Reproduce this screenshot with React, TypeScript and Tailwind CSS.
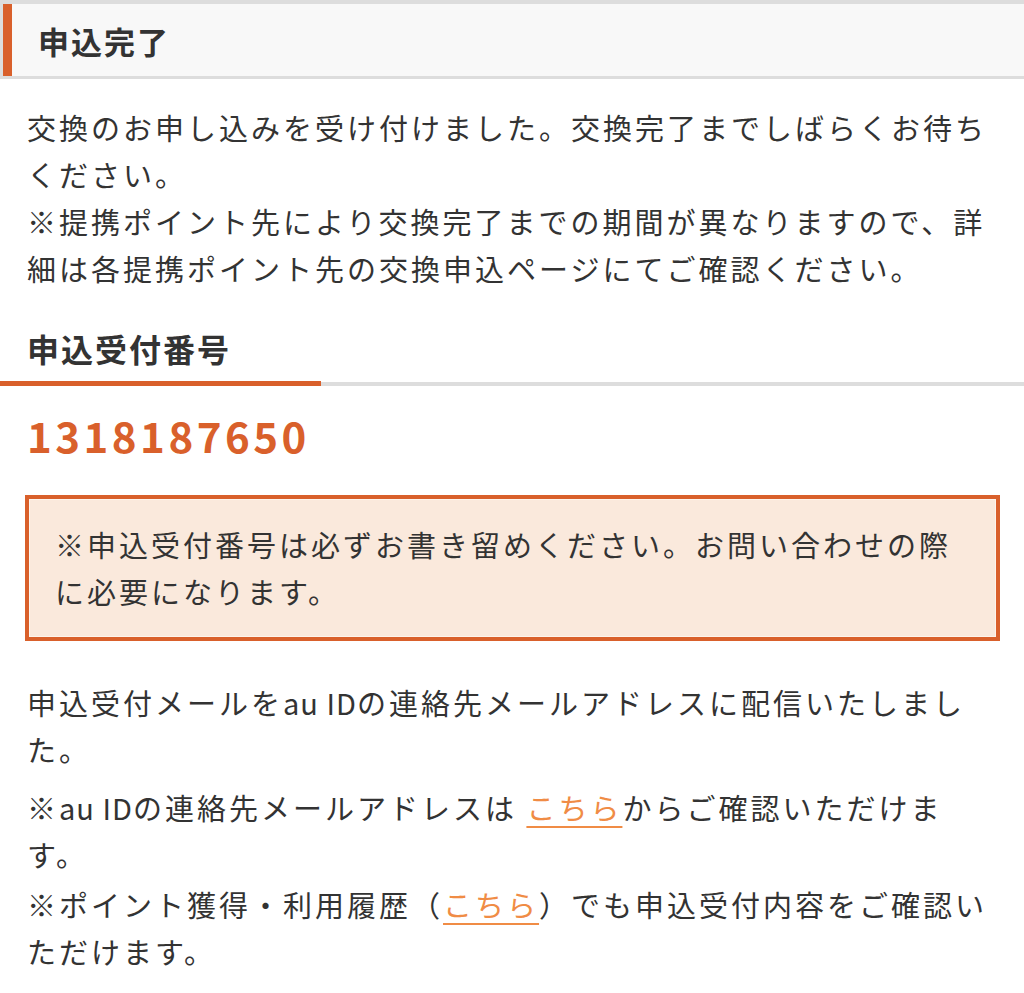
import React from "react";

const ORANGE = "#d9602b";

function SectionTitle({ children }: { children: React.ReactNode }) {
  return (
    <div className="mt-[32px]">
      <h2 className="px-[27px] pb-[9px] text-[32px] font-bold leading-[48px] tracking-[2px]">
        {children}
      </h2>
      <div className="flex h-[5px] items-center">
        <div className="h-[5px] w-[321px] bg-[#d9602b]" />
        <div className="h-[4px] flex-1 bg-[#dddddd]" />
      </div>
    </div>
  );
}

function TextLink({ children }: { children: React.ReactNode }) {
  return (
    <a
      href="#"
      className="text-[#f08c45] underline decoration-[#f08c45] decoration-2 underline-offset-[6px]"
    >
      {children}
    </a>
  );
}

function Latin({ children }: { children: React.ReactNode }) {
  return <span className="tracking-[1px]">{children}</span>;
}

export default function App() {
  return (
    <div className="min-h-[993px] w-[1024px] bg-white font-['Noto_Sans_CJK_JP','Noto_Sans',sans-serif] text-[#333333]">
      {/* page heading */}
      <div className="border-t-4 border-b-[3px] border-[#dddddd] bg-[#dddddd] pl-[3px]">
        <div className="flex h-[72px] items-center border-l-[9px] border-[#d9602b] bg-[#f8f8f8] pl-[26px]">
          <h1 className="text-[31px] font-bold leading-none tracking-[2px]">申込完了</h1>
        </div>
      </div>

      <p className="px-[27px] pt-[25px] text-[29px] leading-[47px] tracking-[3px]">
        交換のお申し込みを受け付けました。交換完了までしばらくお待ちください。
        <br />
        ※提携ポイント先により交換完了までの期間が異なりますので、詳細は各提携ポイント先の交換申込ページにてご確認ください。
      </p>

      <SectionTitle>申込受付番号</SectionTitle>

      <div
        className="px-[27px] pt-[21px] text-[42px] font-bold leading-[56px] tracking-[3.5px]"
        style={{ color: ORANGE }}
      >
        1318187650
      </div>

      <div className="ml-[25px] mt-[32px] w-[975px] border-4 border-[#d9602b] bg-[#fae9dc] px-[26px] py-[22px] shadow-[inset_0_0_0_1px_#fdf4ec]">
        <p className="text-[29px] leading-[47px] tracking-[3px]">
          ※申込受付番号は必ずお書き留めください。お問い合わせの際に必要になります。
        </p>
      </div>

      <div className="px-[27px] pb-[20px] pt-[38px] text-[29px] leading-[47px] tracking-[3px]">
        <p>
          申込受付メールを<Latin>au ID</Latin>の連絡先メールアドレスに配信いたしました。
        </p>
        <p className="mt-[11px]">
          ※<Latin>au ID</Latin>の連絡先メールアドレスは <TextLink>こちら</TextLink>からご確認いただけます。
        </p>
        <p className="mt-[3px]">
          ※ポイント獲得・利用履歴（<TextLink>こちら</TextLink>）でも申込受付内容をご確認いただけます。
        </p>
      </div>
    </div>
  );
}
